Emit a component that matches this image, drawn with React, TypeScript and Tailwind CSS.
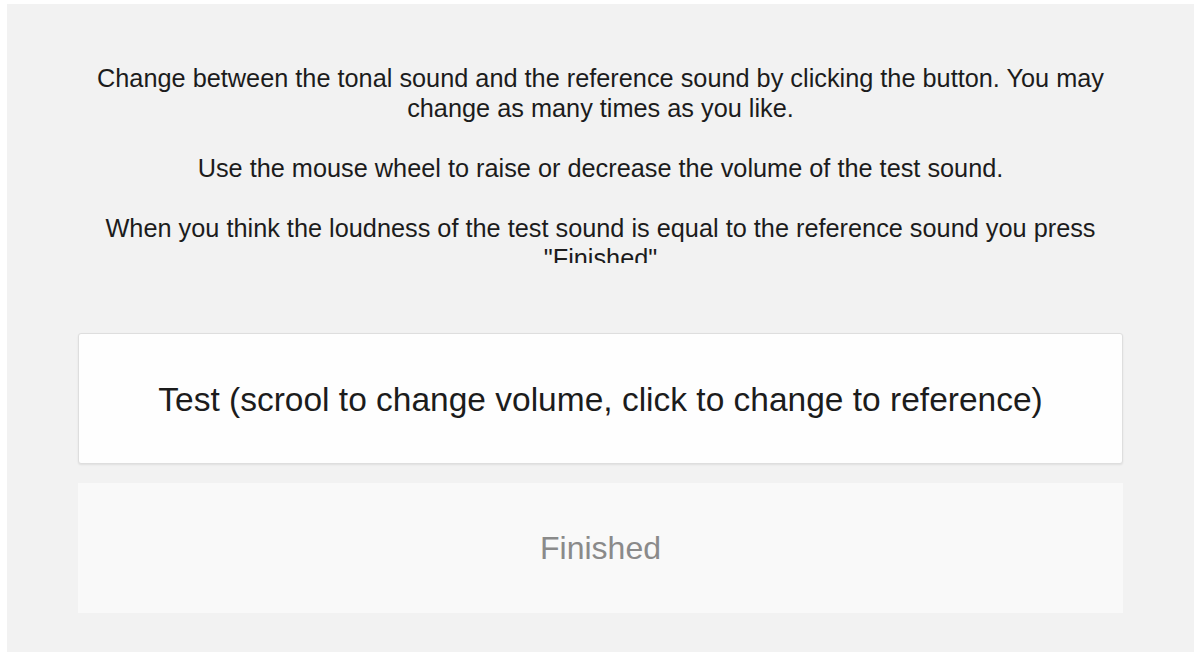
import React from 'react';

const instructions = [
  'Change between the tonal sound and the reference sound by clicking the button. You may change as many times as you like.',
  'Use the mouse wheel to raise or decrease the volume of the test sound.',
  'When you think the loudness of the test sound is equal to the reference sound you press "Finished"',
];

export default function App() {
  return (
    <div className="min-h-screen bg-white pt-[4px] pl-[7px] font-[family-name:'Liberation_Sans',Arial,sans-serif]">
      <div className="w-[1187px] h-[648px] bg-[#f2f2f2] flex flex-col">
        {/* instructions, clipped like the original */}
        <div className="mt-[59px] h-[200px] overflow-hidden w-[1050px] mx-auto text-center text-[25.3px] leading-[30px] text-[#1c1c1c] flex flex-col gap-[30px]">
          {instructions.map((line) => (
            <p key={line}>{line}</p>
          ))}
        </div>

        <div className="mt-[70px] px-[71px] flex flex-col gap-[19px]">
          <button className="h-[131px] w-full pt-[4px] bg-[#fefefe] border border-[#dedede] rounded-[3px] shadow-[0_1px_2px_rgba(0,0,0,0.08)] text-[33.5px] text-[#1c1c1c]">
            Test (scrool to change volume, click to change to reference)
          </button>
          <button className="h-[130px] w-full bg-[#f9f9f9] text-[32px] text-[#8a8a8a]">
            Finished
          </button>
        </div>
      </div>
    </div>
  );
}
